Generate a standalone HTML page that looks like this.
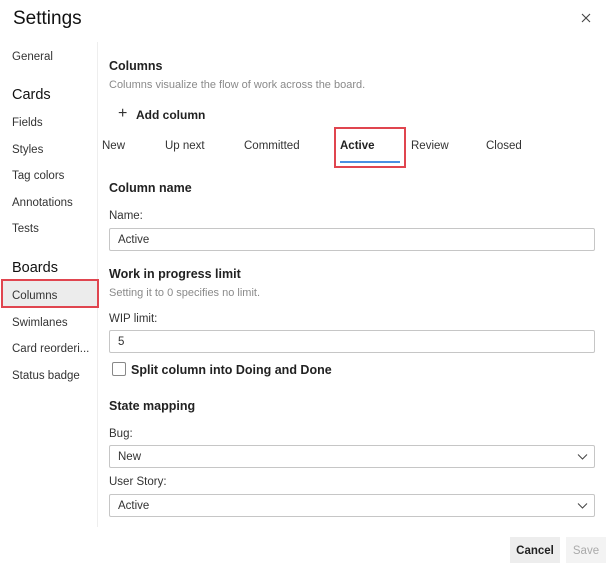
<!DOCTYPE html>
<html><head><style>
body{margin:0;width:607px;height:564px;background:#fff;font-family:"Segoe UI","Liberation Sans",sans-serif;color:#222;position:relative;overflow:hidden}
.a{position:absolute;white-space:nowrap}
.s,.b,.g{margin-top:2px}
.s{font-size:11.5px;color:#333}
.b{font-weight:bold;font-size:12.5px;color:#222}
.g{font-size:11px;color:#8a8a8a}
.in{position:absolute;left:109px;width:484px;height:21px;border:1px solid #c6c6c6;border-radius:2px;font-size:11.5px;color:#333;line-height:23px;padding-left:8px;box-sizing:content-box}
.chev{position:absolute;right:6px;top:7px}
</style></head><body>
<div class="a" style="left:13px;top:8px;font-size:19px;color:#111">Settings</div>
<svg class="a" style="left:581px;top:13px" width="10" height="10"><path d="M1 1L9 9M9 1L1 9" stroke="#444" stroke-width="1.1"/></svg>
<div class="a" style="left:97px;top:42px;width:1px;height:485px;background:#eee"></div>

<div class="a s" style="left:12px;top:49px">General</div>
<div class="a" style="left:12px;top:87px;font-size:14.5px;color:#111">Cards</div>
<div class="a s" style="left:12px;top:115px">Fields</div>
<div class="a s" style="left:12px;top:142px">Styles</div>
<div class="a s" style="left:12px;top:168px">Tag colors</div>
<div class="a s" style="left:12px;top:195px">Annotations</div>
<div class="a s" style="left:12px;top:221px">Tests</div>
<div class="a" style="left:12px;top:260px;font-size:14.5px;color:#111">Boards</div>
<div class="a" style="left:1px;top:279px;width:98px;height:29px;background:#ececec;border:2px solid #e0454f;box-sizing:border-box"></div>
<div class="a s" style="left:12px;top:288px">Columns</div>
<div class="a s" style="left:12px;top:315px">Swimlanes</div>
<div class="a s" style="left:12px;top:341px">Card reorderi...</div>
<div class="a s" style="left:12px;top:368px">Status badge</div>

<div class="a b" style="left:109px;top:57px">Columns</div>
<div class="a g" style="left:109px;top:77px">Columns visualize the flow of work across the board.</div>
<div class="a" style="left:118px;top:105px;font-size:16px;color:#333;font-weight:300">+</div>
<div class="a b" style="left:136px;top:106px;font-size:12px">Add column</div>

<div class="a s" style="left:102px;top:138px">New</div>
<div class="a s" style="left:165px;top:138px">Up next</div>
<div class="a s" style="left:244px;top:138px">Committed</div>
<div class="a" style="left:334px;top:127px;width:72px;height:41px;border:2px solid #e0454f;box-sizing:border-box"></div>
<div class="a s" style="left:340px;top:138px;font-weight:bold;color:#222">Active</div>
<div class="a" style="left:340px;top:161px;width:60px;height:2px;background:#4a90e2"></div>
<div class="a s" style="left:411px;top:138px">Review</div>
<div class="a s" style="left:486px;top:138px">Closed</div>

<div class="a b" style="left:109px;top:179px">Column name</div>
<div class="a s" style="left:109px;top:208px">Name:</div>
<div class="in" style="top:228px;left:109px;width:476px">Active</div>

<div class="a b" style="left:109px;top:265px">Work in progress limit</div>
<div class="a g" style="left:109px;top:285px">Setting it to 0 specifies no limit.</div>
<div class="a s" style="left:109px;top:311px">WIP limit:</div>
<div class="in" style="top:330px;width:476px">5</div>
<div class="a" style="left:112px;top:362px;width:12px;height:12px;border:1px solid #888;border-radius:2px"></div>
<div class="a" style="left:131px;top:363px;font-size:12.5px;color:#222;font-weight:bold">Split column into Doing and Done</div>

<div class="a b" style="left:109px;top:397px">State mapping</div>
<div class="a s" style="left:109px;top:426px">Bug:</div>
<div class="in" style="top:445px;width:476px">New<svg class="chev" width="11" height="8"><path d="M1 1.5L5.5 6L10 1.5" stroke="#444" fill="none"/></svg></div>
<div class="a s" style="left:109px;top:474px">User Story:</div>
<div class="in" style="top:494px;width:476px">Active<svg class="chev" width="11" height="8"><path d="M1 1.5L5.5 6L10 1.5" stroke="#444" fill="none"/></svg></div>

<div class="a" style="left:510px;top:537px;width:50px;height:26px;background:#ededed;font-size:11.5px;font-weight:bold;color:#222;text-align:center;line-height:28px">Cancel</div>
<div class="a" style="left:566px;top:537px;width:40px;height:26px;background:#f3f3f3;font-size:11.5px;color:#aaa;text-align:center;line-height:28px">Save</div>
</body></html>
